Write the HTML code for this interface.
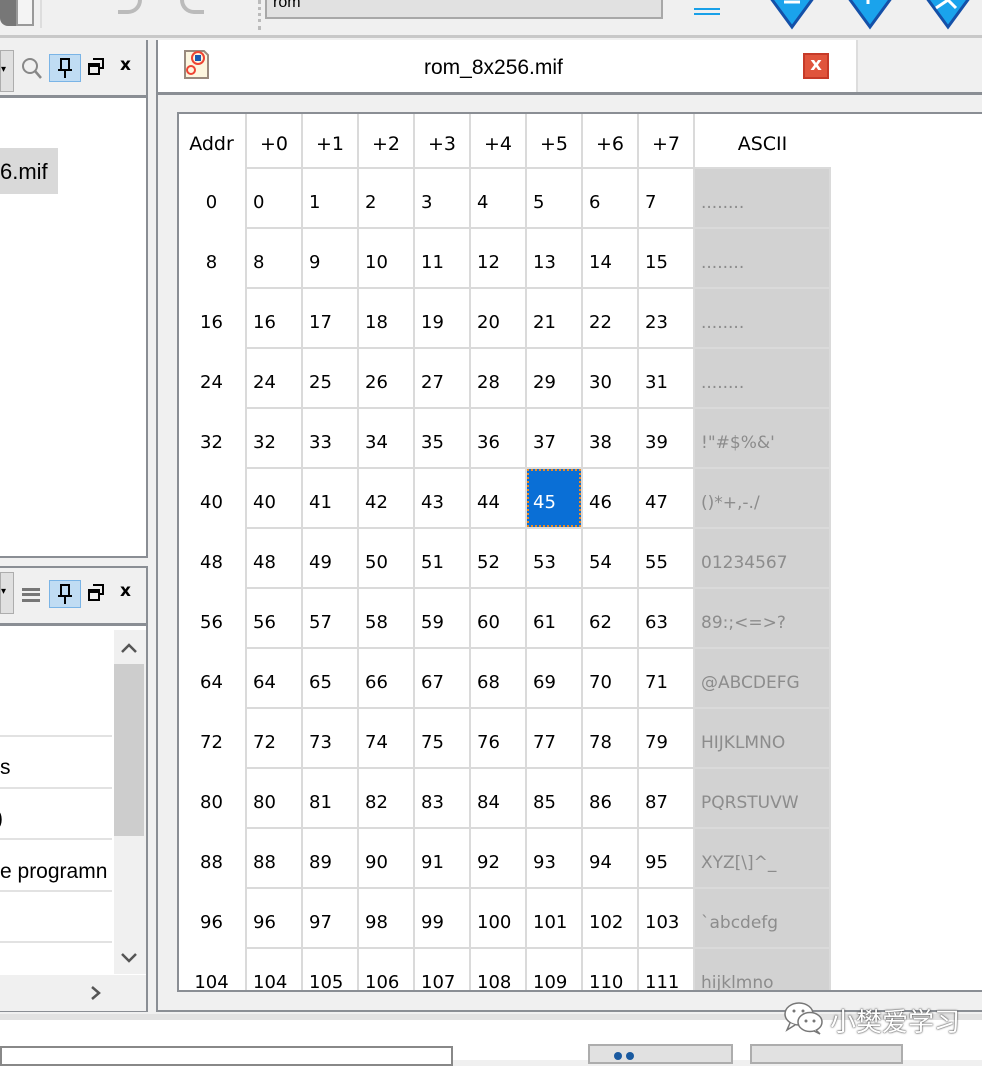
<!DOCTYPE html>
<html><head><meta charset="utf-8"><style>
*{margin:0;padding:0;box-sizing:border-box}
body{width:982px;height:1060px;overflow:hidden;background:#f0f0f0;position:relative;font-family:"DejaVu Sans","Liberation Sans",sans-serif;color:#000}
.a{position:absolute}
table{border-collapse:collapse;table-layout:fixed;font-size:18px}
td{height:60px;border:2px solid #dadada;background:#fff;padding-left:6px;padding-top:9px;vertical-align:middle;white-space:nowrap;overflow:hidden}
td.ad{border:none;text-align:center;padding:9px 0 0 0}
td.as{background:#d2d2d2;color:#8c8c8c;border-color:#dadada;font-size:17px}
tr.h td{height:56px;border-top:none;text-align:center;padding:8px 0 0 0;font-size:19px}
td.sel{background:#0a6fd6;color:#fff;outline:2px dotted #f08a20;outline-offset:-3px}
</style></head><body>
<!-- top toolbar -->
<div class="a" style="left:0;top:0;width:982px;height:38px;background:#f0f0f0;border-bottom:3px solid #c8c8c8"></div>
<div class="a" style="left:0;top:0;width:34px;height:26px;background:#777;border-radius:0 0 0 8px"></div>
<div class="a" style="left:16px;top:0;width:18px;height:26px;background:#f4f4f4;border:2px solid #999;border-top:none"></div>
<div class="a" style="left:40px;top:0;width:2px;height:28px;background:#ddd"></div>
<div class="a" style="left:118px;top:-14px;width:24px;height:28px;border:4px solid #bbb;border-left:none;border-radius:0 14px 14px 0"></div>
<div class="a" style="left:180px;top:-14px;width:24px;height:28px;border:4px solid #bbb;border-right:none;border-radius:14px 0 0 14px"></div>
<div class="a" style="left:258px;top:0;width:3px;height:30px;border-left:3px dotted #bbb"></div>
<div class="a" style="left:265px;top:0;width:398px;height:19px;background:#e1e1e1;border:2px solid #a8a8a8;border-top:none;font-size:16px;padding-left:6px;line-height:6px;font-family:'Liberation Sans',sans-serif">rom</div>
<div class="a" style="left:694px;top:8px;width:26px;height:2px;background:#19a0e8"></div>
<div class="a" style="left:694px;top:13px;width:26px;height:2px;background:#19a0e8"></div>
<svg class="a" style="left:750px;top:0" width="232" height="30"><g fill="#1aa3ec" stroke="#1450a8" stroke-width="3"><path d="M12 -14 L42 27 L72 -14Z"/><path d="M90 -14 L120 27 L150 -14Z"/><path d="M168 -14 L198 27 L228 -14Z"/></g><g stroke="#fff" stroke-width="3"><path d="M34 2H50M34 -4H50"/><path d="M118 -2V4" /><path d="M186 8L210 -8M190 -8L206 8"/></g></svg>

<!-- left top panel -->
<div class="a" style="left:0;top:40px;width:148px;height:518px;background:#fff;border-right:2px solid #8a8e94;border-bottom:2px solid #8a8e94"></div>
<div class="a" style="left:0;top:40px;width:146px;height:58px;background:#f0f0f0;border-bottom:3px solid #8a8e94"></div>
<div class="a" style="left:0;top:50px;width:14px;height:42px;background:#e0e0e0;border:1px solid #adadad;font-size:10px;line-height:38px">▾</div>
<svg class="a" style="left:20px;top:56px" width="24" height="26"><circle cx="10" cy="10" r="7" fill="none" stroke="#888" stroke-width="2"/><path d="M15 15L21 22" stroke="#888" stroke-width="2.5"/></svg>
<div class="a" style="left:49px;top:54px;width:32px;height:28px;background:#c0dcf3;border:1px solid #7ab4e6"></div>
<svg class="a" style="left:55px;top:56px" width="20" height="24"><path d="M6 3H14V14H6Z M3 14H17 M10 14V22" stroke="#000" stroke-width="2" fill="none"/></svg>
<svg class="a" style="left:86px;top:56px" width="20" height="22"><path d="M7 3H17V12H13 M3 8H13V18H3Z M3 10H13" stroke="#000" stroke-width="2" fill="none"/></svg>
<div class="a" style="left:120px;top:55px;font-size:17px;font-weight:bold">x</div>
<div class="a" style="left:0;top:148px;width:58px;height:46px;background:#d9d9d9;font-size:22px;line-height:48px;font-family:'Liberation Sans',sans-serif">6.mif</div>

<!-- left bottom panel -->
<div class="a" style="left:0;top:566px;width:148px;height:446px;background:#fff;border-right:2px solid #8a8e94;border-bottom:2px solid #8a8e94;border-top:2px solid #8a8e94"></div>
<div class="a" style="left:0;top:568px;width:146px;height:58px;background:#f0f0f0;border-bottom:3px solid #8a8e94"></div>
<div class="a" style="left:0;top:572px;width:14px;height:42px;background:#e0e0e0;border:1px solid #adadad;font-size:10px;line-height:38px">▾</div>
<div class="a" style="left:22px;top:588px;width:18px;height:14px;border-top:3px solid #777;border-bottom:3px solid #777"><div style="margin-top:2px;height:3px;background:#777"></div></div>
<div class="a" style="left:49px;top:580px;width:32px;height:28px;background:#c0dcf3;border:1px solid #7ab4e6"></div>
<svg class="a" style="left:55px;top:582px" width="20" height="24"><path d="M6 3H14V14H6Z M3 14H17 M10 14V22" stroke="#000" stroke-width="2" fill="none"/></svg>
<svg class="a" style="left:86px;top:582px" width="20" height="22"><path d="M7 3H17V12H13 M3 8H13V18H3Z M3 10H13" stroke="#000" stroke-width="2" fill="none"/></svg>
<div class="a" style="left:120px;top:581px;font-size:17px;font-weight:bold">x</div>
<div class="a" style="left:114px;top:630px;width:32px;height:344px;background:#f0f0f0"></div>
<div class="a" style="left:114px;top:664px;width:30px;height:172px;background:#cdcdcd"></div>
<svg class="a" style="left:119px;top:641px" width="20" height="14"><path d="M3 11L10 4L17 11" stroke="#555" stroke-width="2.5" fill="none"/></svg>
<svg class="a" style="left:119px;top:951px" width="20" height="14"><path d="M3 3L10 10L17 3" stroke="#555" stroke-width="2.5" fill="none"/></svg>
<div class="a" style="left:0;top:975px;width:146px;height:36px;background:#f0f0f0"></div>
<svg class="a" style="left:89px;top:984px" width="14" height="18"><path d="M3 3L10 9L3 15" stroke="#555" stroke-width="2.5" fill="none"/></svg>
<div class="a" style="left:0;top:735px;width:112px;height:2px;background:#e2e2e2"></div>
<div class="a" style="left:0;top:787px;width:112px;height:2px;background:#e2e2e2"></div>
<div class="a" style="left:0;top:838px;width:112px;height:2px;background:#e2e2e2"></div>
<div class="a" style="left:0;top:890px;width:112px;height:2px;background:#e2e2e2"></div>
<div class="a" style="left:0;top:941px;width:112px;height:2px;background:#e2e2e2"></div>
<div class="a" style="left:0;top:756px;font-size:21px;font-family:'Liberation Sans',sans-serif">s</div>
<div class="a" style="left:-4px;top:807px;font-size:21px;font-family:'Liberation Sans',sans-serif">)</div>
<div class="a" style="left:0;top:860px;font-size:21px;font-family:'Liberation Sans',sans-serif;width:112px;overflow:hidden;white-space:nowrap">e programn</div>

<!-- document window -->
<div class="a" style="left:156px;top:40px;width:826px;height:972px;background:#f0f0f0;border-left:2px solid #8a8e94;border-bottom:2px solid #8a8e94"></div>
<div class="a" style="left:158px;top:40px;width:698px;height:52px;background:#fff"></div>
<div class="a" style="left:158px;top:92px;width:824px;height:3px;background:#8a8e94"></div>
<div class="a" style="left:856px;top:40px;width:2px;height:52px;background:#ddd"></div>
<div class="a" style="left:424px;top:56px;font-size:21px;font-family:'Liberation Sans',sans-serif">rom_8x256.mif</div>
<svg class="a" style="left:182px;top:48px" width="30" height="34"><path d="M3 3H22L26 7V30H3Z" fill="#fdf6df" stroke="#9a8a7e" stroke-width="2"/><circle cx="16" cy="10" r="6" fill="none" stroke="#e43" stroke-width="2"/><rect x="13" y="7" width="6" height="6" fill="#1a5ab0"/><circle cx="9" cy="22" r="4" fill="none" stroke="#e43" stroke-width="2"/></svg>
<div class="a" style="left:803px;top:53px;width:26px;height:26px;background:#e0543c;border:2px solid #c63a28;color:#fff;font-size:18px;font-weight:bold;text-align:center;line-height:20px">x</div>

<div class="a" style="left:177px;top:112px;width:805px;height:880px;background:#fff;border:2px solid #8a8e94;border-right:none;overflow:hidden">
<table style="position:absolute;left:-1px;top:-2px">
<colgroup><col style="width:68px"><col style="width:56px"><col style="width:56px"><col style="width:56px"><col style="width:56px"><col style="width:56px"><col style="width:56px"><col style="width:56px"><col style="width:56px"><col style="width:136px"></colgroup>
<tr class="h"><td class="ad">Addr</td><td>+0</td><td>+1</td><td>+2</td><td>+3</td><td>+4</td><td>+5</td><td>+6</td><td>+7</td><td style="border-right:none">ASCII</td></tr>
<tr><td class="ad">0</td><td>0</td><td>1</td><td>2</td><td>3</td><td>4</td><td>5</td><td>6</td><td>7</td><td class="as">........</td></tr>
<tr><td class="ad">8</td><td>8</td><td>9</td><td>10</td><td>11</td><td>12</td><td>13</td><td>14</td><td>15</td><td class="as">........</td></tr>
<tr><td class="ad">16</td><td>16</td><td>17</td><td>18</td><td>19</td><td>20</td><td>21</td><td>22</td><td>23</td><td class="as">........</td></tr>
<tr><td class="ad">24</td><td>24</td><td>25</td><td>26</td><td>27</td><td>28</td><td>29</td><td>30</td><td>31</td><td class="as">........</td></tr>
<tr><td class="ad">32</td><td>32</td><td>33</td><td>34</td><td>35</td><td>36</td><td>37</td><td>38</td><td>39</td><td class="as"> !"#$%&amp;'</td></tr>
<tr><td class="ad">40</td><td>40</td><td>41</td><td>42</td><td>43</td><td>44</td><td class="sel">45</td><td>46</td><td>47</td><td class="as">()*+,-./</td></tr>
<tr><td class="ad">48</td><td>48</td><td>49</td><td>50</td><td>51</td><td>52</td><td>53</td><td>54</td><td>55</td><td class="as">01234567</td></tr>
<tr><td class="ad">56</td><td>56</td><td>57</td><td>58</td><td>59</td><td>60</td><td>61</td><td>62</td><td>63</td><td class="as">89:;&lt;=&gt;?</td></tr>
<tr><td class="ad">64</td><td>64</td><td>65</td><td>66</td><td>67</td><td>68</td><td>69</td><td>70</td><td>71</td><td class="as">@ABCDEFG</td></tr>
<tr><td class="ad">72</td><td>72</td><td>73</td><td>74</td><td>75</td><td>76</td><td>77</td><td>78</td><td>79</td><td class="as">HIJKLMNO</td></tr>
<tr><td class="ad">80</td><td>80</td><td>81</td><td>82</td><td>83</td><td>84</td><td>85</td><td>86</td><td>87</td><td class="as">PQRSTUVW</td></tr>
<tr><td class="ad">88</td><td>88</td><td>89</td><td>90</td><td>91</td><td>92</td><td>93</td><td>94</td><td>95</td><td class="as">XYZ[\]^_</td></tr>
<tr><td class="ad">96</td><td>96</td><td>97</td><td>98</td><td>99</td><td>100</td><td>101</td><td>102</td><td>103</td><td class="as">`abcdefg</td></tr>
<tr><td class="ad">104</td><td>104</td><td>105</td><td>106</td><td>107</td><td>108</td><td>109</td><td>110</td><td>111</td><td class="as">hijklmno</td></tr>
</table></div>
<div class="a" style="left:177px;top:990px;width:805px;height:2px;background:#8a8e94"></div>

<!-- bottom -->
<div class="a" style="left:0;top:1014px;width:982px;height:6px;background:#e2e2e2"></div>
<div class="a" style="left:0;top:1020px;width:982px;height:40px;background:#fff"></div>
<div class="a" style="left:0;top:1046px;width:453px;height:20px;border:2px solid #888;background:#fff"></div>
<div class="a" style="left:588px;top:1044px;width:145px;height:20px;border:2px solid #adadad;background:#e1e1e1"></div>
<div class="a" style="left:750px;top:1044px;width:153px;height:20px;border:2px solid #adadad;background:#e1e1e1"></div>
<div class="a" style="left:614px;top:1052px;width:8px;height:8px;border-radius:4px;background:#1a5aa0"></div>
<div class="a" style="left:626px;top:1052px;width:8px;height:8px;border-radius:4px;background:#1a5aa0"></div>
<svg class="a" style="left:782px;top:1000px" width="46" height="36"><g fill="#fff" stroke="#777" stroke-width="1.5"><ellipse cx="17" cy="14" rx="14" ry="11"/><path d="M8 23L5 30L13 25"/><ellipse cx="28" cy="22" rx="12" ry="9.5"/><path d="M34 30L38 34L32 31"/></g><g fill="#777"><circle cx="12" cy="11" r="1.5"/><circle cx="21" cy="11" r="1.5"/><circle cx="24" cy="21" r="1.5"/><circle cx="32" cy="21" r="1.5"/></g></svg>
<div class="a" style="left:830px;top:1002px;font-size:26px;color:#fff;font-family:'Noto Sans CJK SC',sans-serif;text-shadow:0 0 2px #444,0 0 1px #444">小樊爱学习</div>
</body></html>
